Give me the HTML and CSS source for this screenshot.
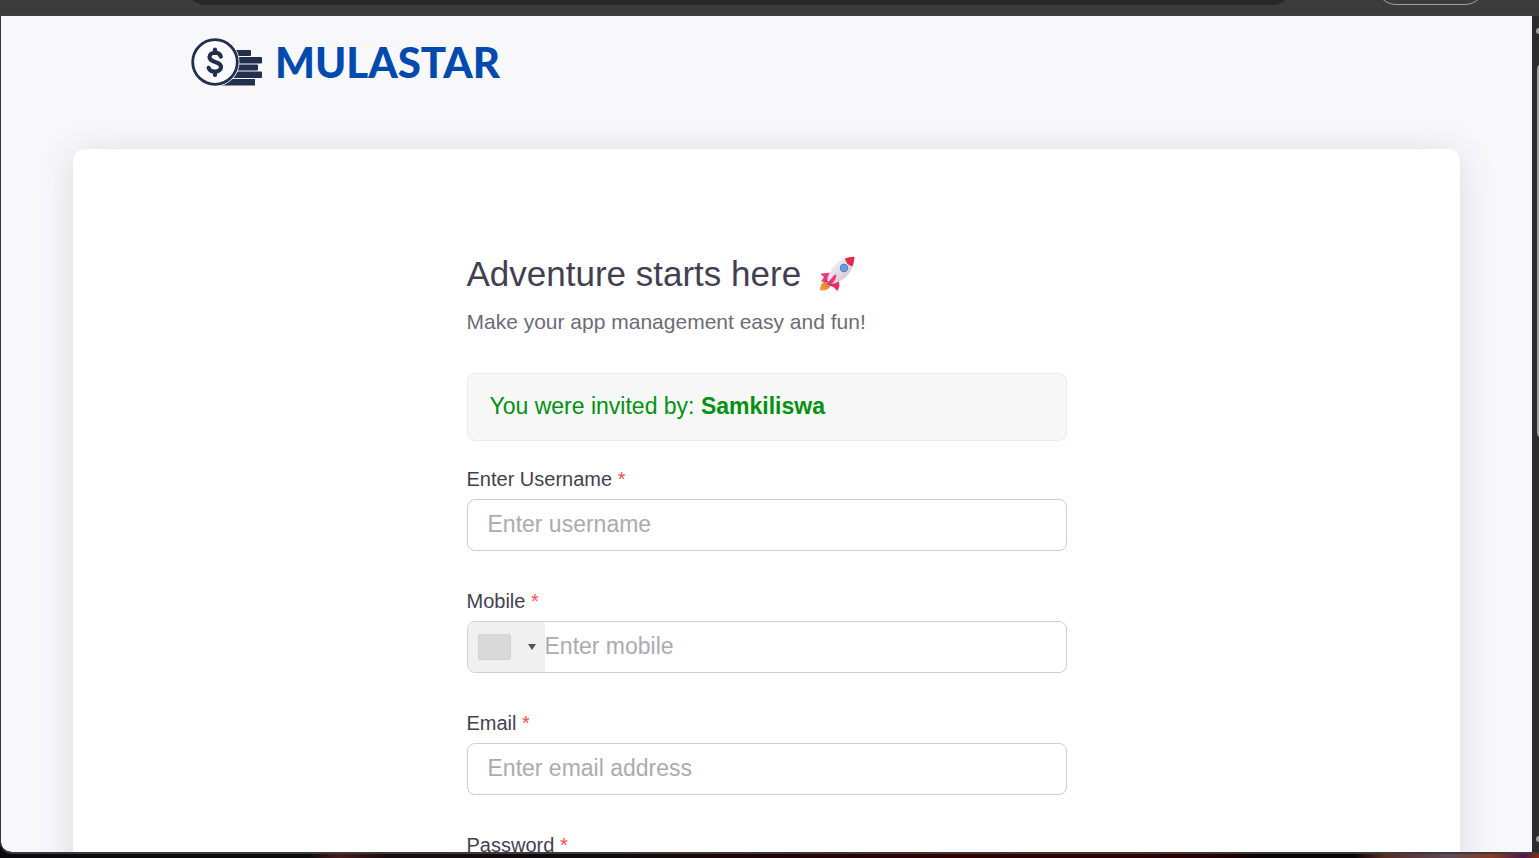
FILE: index.html
```
<!DOCTYPE html>
<html lang="en">
<head>
  <meta charset="UTF-8">
  <meta name="viewport" content="width=device-width, initial-scale=1.0">
  <title>Mulastar</title>
  <link rel="stylesheet" href="styles.css">
</head>
<body>

<div class="toolbar">
  <div class="address-bar"></div>
  <div class="toolbar-pill"></div>
</div>

<div class="window">
  <main class="page">
    <header class="header">
      <a href="#" class="logo">
        <svg class="logo-icon" viewBox="0 0 72 50" aria-hidden="true">
          <g fill="#232f4f">
            <rect x="44" y="12" width="16" height="6" rx="1"/>
            <rect x="44" y="19" width="27" height="6.500" rx="1"/>
            <rect x="44" y="26.500" width="23" height="6" rx="1"/>
            <rect x="38" y="33.500" width="33" height="6.500" rx="1"/>
            <path d="M36 41h28v6.500H29q4-2 7-6.500z"/>
          </g>
          <circle cx="24" cy="24" r="24.500" fill="#f8f7fa"/>
          <circle cx="24" cy="24" r="22.300" fill="#fbfbfd" stroke="#232f4f" stroke-width="2.800"/>
          <path d="M29.800 18.500C28.500 13.300 18.500 13.500 18.500 19c0 6.500 11.500 3.500 11.500 10 0 5.800-11 6.200-12.400.8M24 11.500v3.500M24 33.500v3.500" fill="none" stroke="#232f4f" stroke-width="4.200" stroke-linecap="round"/>
        </svg>
        <span class="logo-text">MULASTAR</span>
      </a>
    </header>

    <section class="card">
      <form class="register-form">
        <h1>Adventure starts here
          <svg class="rocket" viewBox="0 0 36 36" aria-hidden="true">
            <defs>
              <linearGradient id="hull" x1="0" y1="0" x2="1" y2="1">
                <stop offset="0.2" stop-color="#f3edf5"/>
                <stop offset="0.9" stop-color="#cdc0d5"/>
              </linearGradient>
              <linearGradient id="flame" x1="1" y1="0" x2="0" y2="1">
                <stop offset="0" stop-color="#ee6b3a"/>
                <stop offset="1" stop-color="#ffa13a"/>
              </linearGradient>
            </defs>
            <path d="M6 25.500Q1 27 1 34.500q9 .5 10.500-5z" fill="url(#flame)"/>
            <path d="M13 16.500 2.500 17.500q-1 0-.3 1.200L5 21l-3 4.500 7 1 6-6z" fill="#f0396c"/>
            <path d="M19.500 23l1 6.500-1.500 4.500q-.5 1.200-1.500.2L15 31.500l-4-2 5-6z" fill="#ee2c64"/>
            <path d="M6.500 24.500l5.500 5.500 2-1.500-5.500-5.500z" fill="#50418b"/>
            <path d="M8 24.500C10 13.500 18 4 27.500 2L34 8.500C32 18.500 23 26.500 11.800 28.200z" fill="url(#hull)"/>
            <path d="M26 2.400Q30 .8 34.700.8q.8 0 .8.8Q35.300 6 33.500 10.500 27 8.500 26 2.400z" fill="#e42b45"/>
            <path d="M15.500 19 7.500 28l1.800 1q7-2 8-9.500 0-1.500-1.800-.5z" fill="#fa2f6e"/>
            <circle cx="25" cy="12" r="4.200" fill="#7672a0"/>
            <circle cx="25" cy="12" r="3.200" fill="#56a5f3"/>
          </svg>
        </h1>
        <p class="subtitle">Make your app management easy and fun!</p>

        <div class="invite">You were invited by: <strong>Samkiliswa</strong></div>

        <div class="field">
          <label for="username">Enter Username <span class="required">*</span></label>
          <input type="text" id="username" placeholder="Enter username">
        </div>

        <div class="field">
          <label for="mobile">Mobile <span class="required">*</span></label>
          <div class="phone">
            <div class="country">
              <select aria-label="Country code"><option value=""></option></select>
              <span class="flag"></span>
              <span class="arrow"></span>
            </div>
            <input type="tel" id="mobile" placeholder="Enter mobile">
          </div>
        </div>

        <div class="field">
          <label for="email">Email <span class="required">*</span></label>
          <input type="email" id="email" placeholder="Enter email address">
        </div>

        <div class="field">
          <label for="password">Password <span class="required">*</span></label>
          <input type="password" id="password">
        </div>
      </form>
    </section>
  </main>

  <div class="scrollbar">
    <div class="scroll-up"></div>
    <div class="thumb"></div>
    <div class="scroll-down"></div>
  </div>
</div>

<div class="desktop"></div>

</body>
</html>
```
FILE: styles.css
```
* {
  box-sizing: border-box;
}

body {
  margin: 0;
  height: 100vh;
  display: flex;
  flex-direction: column;
  overflow: hidden;
  font-family: "Liberation Sans", Arial, sans-serif;
  color: #433f52;
  background: #0b0b0d;
}

/* browser frame */
.toolbar {
  flex: none;
  height: 16px;
  padding: 0 54px 10px 186px;
  display: flex;
  align-items: flex-end;
  gap: 84px;
  overflow: hidden;
  background: #3c3c3c;
  border-bottom: 1px solid #443c3e;
}

.address-bar {
  flex: 1;
  height: 40px;
  border-radius: 20px;
  background: #282828;
}

.toolbar-pill {
  width: 109px;
  height: 40px;
  border: 1px solid #a0a0a0;
  border-radius: 20px;
}

.window {
  flex: 1;
  min-height: 0;
  display: flex;
  overflow: hidden;
  background: #2c2c2c;
  border-left: 1px solid #38383a;
  border-bottom: 2px solid #3c3a3b;
  border-bottom-left-radius: 12px;
}

.page {
  flex: 1;
  overflow: hidden;
  background: #f8f7fa;
  border-bottom-left-radius: 10px;
}

.scrollbar {
  width: 7px;
  padding: 12px 0 10px 4px;
  display: flex;
  flex-direction: column;
  overflow: hidden;
}

.scroll-up,
.scroll-down {
  flex: none;
  width: 10px;
  height: 6px;
  border-radius: 3px;
  background: #a0a0a0;
}

.thumb {
  flex: none;
  width: 10px;
  height: 46%;
  margin: 30px 0 auto 1px;
  border-radius: 5px;
  background: #a0a0a0;
}

.desktop {
  flex: none;
  height: 4px;
  background: linear-gradient(90deg, #0b0b0d 20%, #4a1a18 22%, #1a0d12 25%, #10090b 40%, #330000 62%, #2c0000 78%, #0a0306 82%, #0a0306 88%, #5a2a22 90%, #5b4a58 94%, #8a3a20 97%, #4a1a50 99%, #8a3010);
}

/* page */
.header {
  padding: 22px 190px 0;
}

.logo {
  display: inline-flex;
  align-items: center;
  gap: 12px;
  text-decoration: none;
}

.logo-icon {
  width: 72px;
  height: 50px;
}

.logo-text {
  padding-bottom: 2px;
  font-family: Lato, sans-serif;
  font-size: 42px;
  line-height: 48px;
  font-weight: 900;
  color: #004aad;
}

.card {
  margin: 57px 72px 0;
  padding: 103px 24px;
  background: #fff;
  border-radius: 12px;
  box-shadow: 0 4px 36px rgba(75, 70, 92, 0.16);
}

.register-form {
  max-width: 600px;
  margin: 0 auto;
}

h1 {
  margin: 0 0 11px;
  display: flex;
  align-items: center;
  gap: 18px;
  font-size: 35px;
  line-height: 44px;
  font-weight: 400;
}

.rocket {
  width: 36px;
  height: 36px;
}

.subtitle {
  margin: 0 0 36px;
  font-size: 21px;
  line-height: 30px;
  color: #6d6b77;
}

.invite {
  height: 68px;
  margin-bottom: 26px;
  padding: 0 22px;
  font-size: 23px;
  line-height: 64px;
  color: #009110;
  background: #f7f7f7;
  border: 1px solid #dff3e8;
  border-radius: 8px;
}

.field {
  margin-bottom: 38px;
}

.field label {
  display: block;
  margin-bottom: 8px;
  font-size: 20px;
  line-height: 24px;
}

.required {
  color: #ff4c51;
}

input {
  display: block;
  width: 100%;
  height: 52px;
  padding: 0 20px 2px;
  font-family: inherit;
  font-size: 23px;
  color: #433f52;
  background: #fff;
  border: 1px solid #cfced2;
  border-radius: 8px;
  outline: none;
}

input::placeholder {
  color: #acaab1;
  opacity: 1;
}

.phone {
  display: flex;
  height: 52px;
  border: 1px solid #cfced2;
  border-radius: 8px;
  overflow: hidden;
}

.phone input {
  height: 50px;
  padding-left: 0;
  border: none;
}

.country {
  flex: none;
  width: 77px;
  display: grid;
  align-items: center;
  background: #f0f0f0;
}

.country > * {
  grid-area: 1 / 1;
}

.country select {
  width: 100%;
  height: 100%;
  border: none;
  background: transparent;
  appearance: none;
}

.flag {
  width: 33px;
  height: 26px;
  margin-left: 10px;
  background: #d9d9d9;
  border: 1px solid #d2d2d2;
  border-radius: 2px;
  pointer-events: none;
}

.arrow {
  justify-self: end;
  margin-right: 9px;
  border: 4px solid transparent;
  border-top: 6px solid #555;
  border-bottom: 0;
  pointer-events: none;
}
```
